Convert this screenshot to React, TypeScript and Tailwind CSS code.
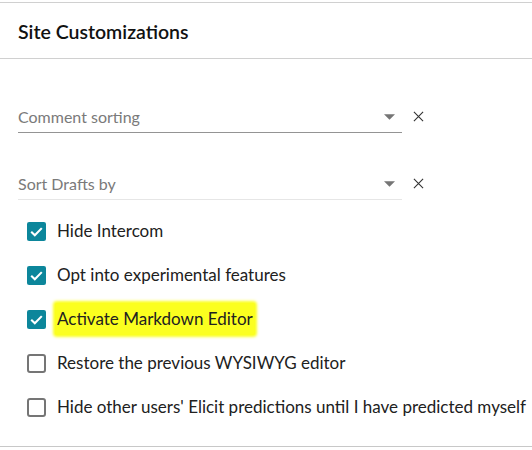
const CheckIcon = () => (
  <svg viewBox="0 0 18 18" className="w-[19px] h-[19px]">
    <rect x="0" y="0" width="18" height="18" rx="2" fill="#0c869b" />
    <path d="M4 9.2 L7.4 12.5 L14 5.8" stroke="white" strokeWidth="2" fill="none" />
  </svg>
);

const EmptyBox = () => (
  <div className="w-[19px] h-[19px] rounded-[3px] border-2 border-[#757575]" />
);

const SelectField = ({ label, active }: { label: string; active?: boolean }) => (
  <div className="flex items-end">
    <div
      className={`w-[384px] flex items-center justify-between border-b ${
        active ? "border-[#949494]" : "border-[#e6e6e6]"
      } pb-[3px]`}
    >
      <span className="text-[16px] text-[#7a7a7a]">{label}</span>
      <svg viewBox="0 0 10 5" className="w-[11px] h-[6px] mr-[7px]">
        <path d="M0 0 L10 0 L5 5 Z" fill="#757575" />
      </svg>
    </div>
    <svg viewBox="0 0 12 12" className="w-[11px] h-[11px] ml-[11px] mb-[11px]">
      <path d="M1 1 L11 11 M11 1 L1 11" stroke="#333" strokeWidth="1.2" />
    </svg>
  </div>
);

const Option = ({
  label,
  checked,
  highlight,
}: {
  label: string;
  checked?: boolean;
  highlight?: boolean;
}) => (
  <div className="flex items-center h-[44px] pl-[27px]">
    {checked ? <CheckIcon /> : <EmptyBox />}
    <span
      className={`text-[17px] text-[#212121] ${
        highlight
          ? "bg-[#fbff1f] ml-[9px] px-[2px] rounded-[2px] py-[3px] shadow-[0_0_3px_2px_#fbff1f]"
          : "ml-[11px]"
      }`}
    >
      {label}
    </span>
  </div>
);

export default function App() {
  return (
    <div
      className="w-[532px] h-[450px] bg-white pt-[2px]"
      style={{ fontFamily: "Lato, 'Open Sans', sans-serif" }}
    >
      <div className="border-t border-b border-[#d0d0d0] h-[57px] flex items-center pl-[18px] pt-[3px]">
        <h2 className="text-[19.5px] font-semibold text-[#111]">Site Customizations</h2>
      </div>
      <div className="pl-[18px] pt-[46px] flex flex-col gap-[39px]">
        <SelectField label="Comment sorting" active />
        <SelectField label="Sort Drafts by" />
      </div>
      <div className="pt-[9px] pb-[17px] border-b border-[#c8c8c8]">
        <Option label="Hide Intercom" checked />
        <Option label="Opt into experimental features" checked />
        <Option label="Activate Markdown Editor" checked highlight />
        <Option label="Restore the previous WYSIWYG editor" />
        <Option label="Hide other users' Elicit predictions until I have predicted myself" />
      </div>
    </div>
  );
}
